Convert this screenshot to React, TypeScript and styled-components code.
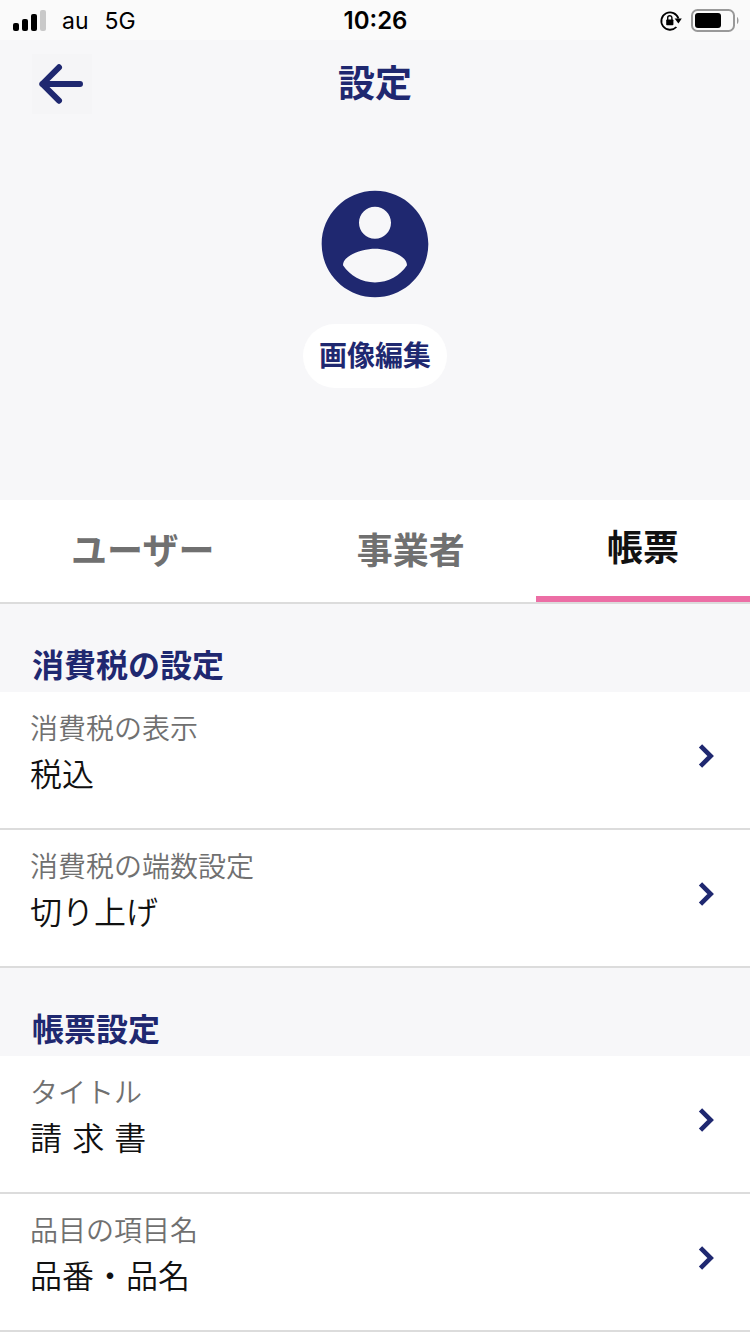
import React, { useState } from 'react';
import styled, { createGlobalStyle } from 'styled-components';

const navy = '#1f2870';
const line = '#dcdcdc';
const shade = '#f7f7f9';

const GlobalStyle = createGlobalStyle`
  *, *::before, *::after { box-sizing: border-box; }
  body {
    margin: 0;
    background: #fff;
    color: #111;
    font-family: Inter, "Noto Sans CJK JP", sans-serif;
  }
  button {
    margin: 0;
    padding: 0;
    border: 0;
    background: none;
    color: inherit;
    font: inherit;
    cursor: pointer;
  }
`;

const Page = styled.div`
  display: flex;
  flex-direction: column;
  min-height: 100vh;
  overflow: hidden;
`;

const StatusBar = styled.div`
  display: grid;
  grid-template-columns: 1fr auto 1fr;
  align-items: center;
  height: 40px;
  padding: 0 11px 0 12px;
  background: #fafafa;
  color: #000;
  line-height: 40px;
`;

const Carrier = styled.div`
  display: flex;
  align-items: center;
  gap: 16px;
  font-size: 23px;
`;

const Clock = styled.time`
  padding-top: 1px;
  font-size: 24px;
  font-weight: 600;
`;

const Indicators = styled.div`
  display: flex;
  justify-content: flex-end;
  align-items: center;
  gap: 8px;
`;

const Header = styled.header`
  display: grid;
  grid-template-columns: 60px 1fr 60px;
  align-items: center;
  padding: 14px 32px 0;
  background: ${shade};
`;

const BackButton = styled.button`
  display: flex;
  height: 60px;
  background: #f5f5f7;
`;

const Title = styled.h1`
  margin: 0;
  color: ${navy};
  font-size: 37px;
  font-weight: 700;
  line-height: 60px;
  text-align: center;
`;

const Profile = styled.section`
  display: flex;
  flex-direction: column;
  align-items: center;
  gap: 16px;
  padding: 66px 0 112px;
  background: ${shade};
`;

const EditButton = styled.button`
  padding: 0 16px;
  border-radius: 32px;
  background: #fff;
  color: ${navy};
  font-size: 28px;
  font-weight: 700;
  line-height: 64px;
`;

const Tabs = styled.div`
  display: flex;
  border-bottom: 2px solid ${line};
  background: #fff;
`;

const Tab = styled.button<{ $active: boolean }>`
  flex: 1 1 auto;
  height: 102px;
  border-bottom: ${(p) => (p.$active ? '6px solid #ec6ea5' : '0')};
  color: ${(p) => (p.$active ? '#111' : '#707070')};
  font-size: 36px;
  font-weight: 700;
  line-height: 48px;
`;

const SectionTitle = styled.h2`
  margin: 0;
  padding: 38px 32px 2px;
  background: ${shade};
  color: ${navy};
  font-size: 32px;
  font-weight: 700;
  line-height: 48px;
`;

const Rows = styled.div`
  background: #fff;
`;

const Row = styled.button`
  display: flex;
  justify-content: space-between;
  align-items: center;
  width: 100%;
  height: 138px;
  padding: 0 36px 8px 30px;
  border-bottom: 2px solid ${line};
  font-weight: 350;
  text-align: left;
`;

const RowText = styled.span`
  display: flex;
  flex-direction: column;
  padding-bottom: 6px;
`;

const Label = styled.span`
  color: #707070;
  font-size: 28px;
  line-height: 44px;
`;

const Value = styled.span`
  font-family: "DejaVu Sans", "Noto Sans CJK JP", sans-serif;
  font-size: 32px;
  line-height: 48px;
`;

const SignalIcon = () => (
  <svg width="34" height="22" viewBox="0 0 34 22" aria-hidden="true">
    <rect x="1" y="13" width="6" height="8" rx="2" />
    <rect x="10" y="9" width="6" height="12" rx="2" />
    <rect x="19" y="4" width="6" height="17" rx="2" />
    <rect x="28" y="0" width="6" height="21" rx="2" fill="#c9c9c9" />
  </svg>
);

const RotationLockIcon = () => (
  <svg width="24" height="22" viewBox="0 0 24 22" aria-hidden="true">
    <path d="M17.4 17A8.7 8.7 0 1 1 19.4 8.6" fill="none" stroke="#000" strokeWidth="1.8" />
    <path d="M15.6 8.6h7.2l-3.4 4.8z" />
    <rect x="7.2" y="9.4" width="7.2" height="5.8" rx="0.8" />
    <path d="M8.7 10V7.8a2.1 2.1 0 0 1 4.2 0V10" fill="none" stroke="#000" strokeWidth="1.4" />
  </svg>
);

const BatteryIcon = () => (
  <svg width="48" height="24" viewBox="0 0 48 24" aria-hidden="true">
    <rect x="1" y="1" width="42" height="21" rx="5.5" fill="none" stroke="#999" strokeWidth="2" />
    <rect x="4" y="4" width="26" height="15" rx="3" />
    <path d="M46 8c2 1 2 6 0 7z" fill="#999" />
  </svg>
);

const BackIcon = () => (
  <svg width="60" height="60" viewBox="0 0 60 60" aria-hidden="true">
    <path d="M27 13.3 10.3 30 27 46.7M10.3 30H48" fill="none" stroke={navy} strokeWidth="6" strokeLinecap="round" strokeLinejoin="round" />
  </svg>
);

const AvatarIcon = () => (
  <svg width="128" height="128" viewBox="0 0 24 24" fill={navy} aria-hidden="true">
    <path d="M12 2C6.48 2 2 6.48 2 12s4.48 10 10 10 10-4.48 10-10S17.52 2 12 2zm0 3c1.66 0 3 1.34 3 3s-1.34 3-3 3-3-1.34-3-3 1.34-3 3-3zm0 14.2c-2.5 0-4.71-1.28-6-3.22.03-1.99 4-3.08 6-3.08 1.99 0 5.97 1.09 6 3.08-1.29 1.94-3.5 3.22-6 3.22z" />
  </svg>
);

const ChevronIcon = () => (
  <svg width="24" height="28" viewBox="0 0 24 28" aria-hidden="true">
    <path d="M10.5 3.8 20.7 14 10.5 24.2" fill="none" stroke={navy} strokeWidth="4.6" />
  </svg>
);

const tabs = ['ユーザー', '事業者', '帳票'];

const sections = [
  {
    title: '消費税の設定',
    rows: [
      { label: '消費税の表示', value: '税込' },
      { label: '消費税の端数設定', value: '切り上げ' },
    ],
  },
  {
    title: '帳票設定',
    rows: [
      { label: 'タイトル', value: '請 求 書' },
      { label: '品目の項目名', value: '品番・品名' },
    ],
  },
];

export default function App() {
  const [active, setActive] = useState('帳票');
  return (
    <Page>
      <GlobalStyle />
      <StatusBar>
        <Carrier>
          <SignalIcon />
          <span>au</span>
          <span>5G</span>
        </Carrier>
        <Clock>10:26</Clock>
        <Indicators>
          <RotationLockIcon />
          <BatteryIcon />
        </Indicators>
      </StatusBar>
      <Header>
        <BackButton type="button" aria-label="戻る">
          <BackIcon />
        </BackButton>
        <Title>設定</Title>
      </Header>
      <Profile>
        <AvatarIcon />
        <EditButton type="button">画像編集</EditButton>
      </Profile>
      <Tabs role="tablist">
        {tabs.map((tab) => (
          <Tab
            key={tab}
            type="button"
            role="tab"
            aria-selected={tab === active}
            $active={tab === active}
            onClick={() => setActive(tab)}
          >
            {tab}
          </Tab>
        ))}
      </Tabs>
      {sections.map((section) => (
        <section key={section.title}>
          <SectionTitle>{section.title}</SectionTitle>
          <Rows>
            {section.rows.map((row) => (
              <Row key={row.label} type="button">
                <RowText>
                  <Label>{row.label}</Label>
                  <Value>{row.value}</Value>
                </RowText>
                <ChevronIcon />
              </Row>
            ))}
          </Rows>
        </section>
      ))}
    </Page>
  );
}
